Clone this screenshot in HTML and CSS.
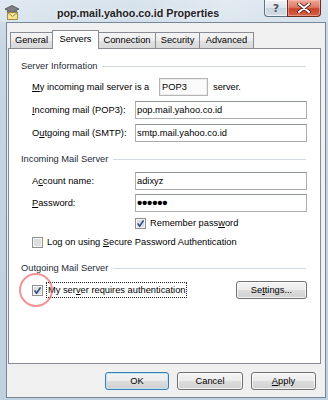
FILE: index.html
```html
<!DOCTYPE html>
<html>
<head>
<meta charset="utf-8">
<title>pop.mail.yahoo.co.id Properties</title>
<link rel="stylesheet" href="styles.css">
</head>
<body>
<div class="window">
  <div class="titlebar">
    <svg class="app-icon" viewBox="0 0 16 16" width="16" height="16">
      <polygon points="1,5 8,1.5 15,5 8,8.5" fill="#7d7f82" stroke="#4a4c50" stroke-width="0.8"/>
      <polygon points="3,6.5 8,9 13,6.5 13,9 8,11 3,9" fill="#5c5f63"/>
      <rect x="3.5" y="8.5" width="10" height="7" fill="#f3e39a" stroke="#9b8534" stroke-width="0.9"/>
      <polyline points="3.5,8.5 8.5,12.5 13.5,8.5" fill="none" stroke="#9b8534" stroke-width="0.9"/>
    </svg>
    <span class="title">pop.mail.yahoo.co.id Properties</span>
    <div class="caption-buttons">
      <div class="cap help">?</div>
      <div class="cap close">
        <svg viewBox="0 0 14 10" width="14" height="10">
          <path d="M2 1 L12 9 M12 1 L2 9" stroke="#5a1f17" stroke-width="3.6" stroke-linecap="round"/>
          <path d="M2 1 L12 9 M12 1 L2 9" stroke="#ffffff" stroke-width="2" stroke-linecap="round"/>
        </svg>
      </div>
    </div>
  </div>
  <div class="client">
    <div class="tabs">
      <div class="tab t-general">General</div>
      <div class="tab t-servers selected">Servers</div>
      <div class="tab t-connection">Connection</div>
      <div class="tab t-security">Security</div>
      <div class="tab t-advanced">Advanced</div>
    </div>
    <div class="panel">
      <div class="group-title"><span>Server Information</span></div>
      <div class="type-row">
        <span class="type-label"><u>M</u>y incoming mail server is a</span>
        <span class="readonly">POP3</span>
        <span class="type-suffix">server.</span>
      </div>
      <div class="field gap5">
        <span class="label"><u>I</u>ncoming mail (POP3):</span>
        <div class="input">pop.mail.yahoo.co.id</div>
      </div>
      <div class="field gap5">
        <span class="label">O<u>u</u>tgoing mail (SMTP):</span>
        <div class="input">smtp.mail.yahoo.co.id</div>
      </div>

      <div class="group-title gap11"><span>Incoming Mail Server</span></div>
      <div class="field gap7">
        <span class="label">A<u>c</u>count name:</span>
        <div class="input">adixyz</div>
      </div>
      <div class="field gap4">
        <span class="label"><u>P</u>assword:</span>
        <div class="input dots">&bull;&bull;&bull;&bull;&bull;&bull;</div>
      </div>
      <div class="check-row remember">
        <svg class="cb" viewBox="0 0 11 11" width="11" height="11">
          <rect x="0.5" y="0.5" width="10" height="10" fill="#f6f6f6" stroke="#8e8f8f"/>
          <rect x="2" y="2" width="7" height="7" fill="#dedede"/>
          <path d="M2.6 5.4 L4.6 8.2 L8.6 2.4" fill="none" stroke="#2c4a86" stroke-width="1.6"/>
        </svg>
        <span>Remember pass<u>w</u>ord</span>
      </div>
      <div class="check-row logon">
        <svg class="cb" viewBox="0 0 11 11" width="11" height="11">
          <rect x="0.5" y="0.5" width="10" height="10" fill="#f6f6f6" stroke="#8e8f8f"/>
          <rect x="2" y="2" width="7" height="7" fill="#dedede"/>
        </svg>
        <span>Log on using <u>S</u>ecure Password Authentication</span>
      </div>

      <div class="group-title gap13"><span>Outgoing Mail Server</span></div>
      <div class="auth-row">
        <svg class="cb" viewBox="0 0 11 11" width="11" height="11">
          <rect x="0.5" y="0.5" width="10" height="10" fill="#f6f6f6" stroke="#8e8f8f"/>
          <rect x="2" y="2" width="7" height="7" fill="#dedede"/>
          <path d="M2.6 5.4 L4.6 8.2 L8.6 2.4" fill="none" stroke="#2c4a86" stroke-width="1.6"/>
        </svg>
        <span class="focus">My ser<u>v</u>er requires authentication</span>
        <div class="btn settings">Se<u>t</u>tings...</div>
        <div class="ring"></div>
      </div>
    </div>
    <div class="buttons">
      <div class="btn default ok">OK</div>
      <div class="btn cancel">Cancel</div>
      <div class="btn apply"><u>A</u>pply</div>
    </div>
  </div>
</div>
</body>
</html>
```

FILE: styles.css
```css
html, body {
  margin: 0;
  padding: 0;
}

body {
  width: 328px;
  height: 400px;
  overflow: hidden;
  font-family: "Liberation Sans", Arial, sans-serif;
  font-size: 9.3px;
  color: #000;
  background: #ffffff;
}

u {
  text-decoration: underline;
  text-underline-offset: 1px;
}

.window {
  box-sizing: border-box;
  width: 328px;
  height: 400px;
  padding: 0 2px 2px 6px;
  display: flex;
  flex-direction: column;
  background: linear-gradient(180deg, #d6e2ec 0%, #c7d6e3 12%, #bfd0df 100%);
}

/* title bar */
.titlebar {
  height: 22px;
  flex: none;
  display: flex;
  align-items: flex-start;
  margin: 0 -2px 0 -6px;
  background: linear-gradient(90deg, rgba(255,255,255,0.25), rgba(255,255,255,0.05) 40%, rgba(255,255,255,0.3) 70%, rgba(255,255,255,0.1));
}

.app-icon {
  margin: 4px 0 0 4px;
  flex: none;
}

.title {
  margin: 5px 0 0 37px;
  line-height: 16px;
  font-size: 10.7px;
  font-weight: bold;
  color: #1f2226;
  white-space: nowrap;
  text-shadow: 0 0 4px rgba(255,255,255,0.9);
}

.caption-buttons {
  margin-left: auto;
  margin-right: 7px;
  display: flex;
}

.cap {
  box-sizing: border-box;
  height: 17px;
  border: 1px solid #5d6f82;
  border-top: none;
  display: flex;
  align-items: center;
  justify-content: center;
}

.help {
  width: 23px;
  border-radius: 0 0 0 4px;
  border-right: none;
  background: linear-gradient(180deg, #eef2f6 0%, #dde5ec 50%, #c9d4de 51%, #d5dde5 100%);
  color: #4b5560;
  font-family: "DejaVu Sans", sans-serif;
  font-size: 11px;
  font-weight: bold;
  box-shadow: inset 0 0 0 1px rgba(255,255,255,0.6);
}

.close {
  width: 34px;
  border-color: #6b2a22;
  border-radius: 0 0 4px 0;
  background: linear-gradient(180deg, #eba697 0%, #dd7a66 45%, #c8442c 55%, #d4654a 100%);
  box-shadow: inset 0 0 0 1px rgba(255,200,190,0.5);
}

/* client area */
.client {
  flex: 1;
  box-sizing: border-box;
  border: 1px solid #76879a;
  background: #f0f0f0;
  padding: 7px 4px 0 1px;
  display: flex;
  flex-direction: column;
}

.tabs {
  height: 18px;
  flex: none;
  display: flex;
  align-items: flex-end;
  padding-left: 2px;
  position: relative;
  z-index: 2;
}

.tab {
  box-sizing: border-box;
  height: 16px;
  margin-right: -1px;
  border: 1px solid #898c95;
  border-bottom: none;
  text-align: center;
  line-height: 15px;
  font-size: 9.3px;
  color: #000;
  background: linear-gradient(180deg, #f4f4f4 0%, #ececec 50%, #e1e1e1 51%, #d9d9d9 100%);
}

.tab.selected {
  height: 19px;
  margin-bottom: -1px;
  line-height: 16px;
  background: #ffffff;
  position: relative;
  z-index: 3;
}

.t-general { width: 43px; }
.t-servers { width: 47px; }
.t-connection { width: 58px; }
.t-security { width: 45px; }
.t-advanced { width: 55px; }

.panel {
  box-sizing: border-box;
  width: 313px;
  height: 316px;
  flex: none;
  border: 1px solid #898c95;
  background: #ffffff;
  padding: 11px 13px 0 12px;
  display: flex;
  flex-direction: column;
}

.group-title {
  height: 12px;
  line-height: 12px;
  margin-right: 1px;
  display: flex;
  align-items: center;
  color: #1e2a36;
}

.group-title::after {
  content: "";
  flex: 1;
  height: 1px;
  margin-left: 5px;
  background: #d2d9df;
}

.gap4 { margin-top: 4px; }
.gap5 { margin-top: 5px; }
.gap7 { margin-top: 7px; }
.gap11 { margin-top: 11px; }
.gap13 { margin-top: 13px; }

.type-row {
  margin-top: 6px;
  height: 18px;
  line-height: 18px;
  padding-left: 11px;
  display: flex;
  align-items: center;
}

.type-label {
  width: 127px;
  flex: none;
}

.readonly {
  box-sizing: border-box;
  width: 49px;
  height: 18px;
  line-height: 16px;
  padding-left: 2px;
  border: 1px solid #b5b5b5;
  box-shadow: inset 0 0 0 1px #ececec;
  background: #fbfbfb;
}

.type-suffix {
  margin-left: 5px;
}

.field {
  height: 18px;
  padding-left: 11px;
  display: grid;
  grid-template-columns: 103px 172px;
  align-items: center;
}

.label {
  line-height: 18px;
}

.input {
  box-sizing: border-box;
  height: 18px;
  line-height: 16px;
  padding-left: 1px;
  border: 1px solid #abadb3;
  border-top-color: #8f939b;
  background: #ffffff;
  white-space: nowrap;
}

.input.dots {
  font-size: 15px;
  font-weight: bold;
  letter-spacing: -0.2px;
  line-height: 15px;
  padding-left: 1px;
}

.check-row {
  height: 13px;
  line-height: 13px;
  display: flex;
  align-items: center;
}

.check-row .cb {
  margin-right: 4px;
  flex: none;
}

.remember {
  margin-top: 5px;
  padding-left: 114px;
}

.logon {
  margin-top: 6px;
  padding-left: 11px;
}

.auth-row {
  margin-top: 7px;
  height: 18px;
  padding-left: 11px;
  display: flex;
  align-items: center;
  position: relative;
}

.auth-row .cb {
  flex: none;
  margin-right: 3px;
}

.focus {
  box-sizing: border-box;
  height: 16px;
  line-height: 14px;
  padding: 0 1px;
  border: 1px dotted #222;
}

.btn {
  box-sizing: border-box;
  height: 18px;
  line-height: 16px;
  text-align: center;
  border: 1px solid #707070;
  border-radius: 3px;
  background: linear-gradient(180deg, #f4f4f4 0%, #ececec 48%, #dddddd 52%, #d0d0d0 100%);
  box-shadow: inset 0 0 0 1px rgba(255,255,255,0.75);
  color: #000;
}

.settings {
  width: 71px;
  margin-left: auto;
}

.ring {
  position: absolute;
  left: -2px;
  top: -8px;
  width: 34px;
  height: 34px;
  box-sizing: border-box;
  border-radius: 50%;
  border: 2.5px solid rgba(228, 78, 78, 0.6);
  filter: blur(0.6px);
  pointer-events: none;
}

.buttons {
  margin-top: 8px;
  padding-right: 5px;
  display: flex;
  justify-content: flex-end;
  gap: 8px;
}

.ok { width: 64px; }
.cancel { width: 66px; }
.apply { width: 65px; }

.btn.default {
  border-color: #3c7fb1;
  box-shadow: inset 0 0 0 1px #bfe3f7;
}
```
